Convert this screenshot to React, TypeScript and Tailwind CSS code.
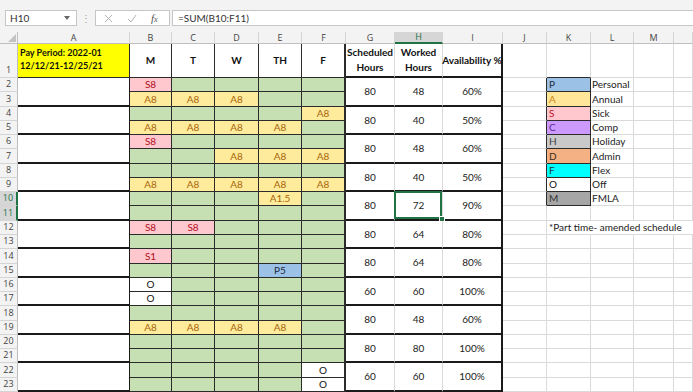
import clsx from 'clsx';

const schedule: string[][] = [
  ['S8', '', '', '', ''],
  ['A8', 'A8', 'A8', '', ''],
  ['', '', '', '', 'A8'],
  ['A8', 'A8', 'A8', 'A8', ''],
  ['S8', '', '', '', ''],
  ['', '', 'A8', 'A8', 'A8'],
  ['', '', '', '', ''],
  ['A8', 'A8', 'A8', 'A8', 'A8'],
  ['', '', '', 'A1.5', ''],
  ['', '', '', '', ''],
  ['S8', 'S8', '', '', ''],
  ['', '', '', '', ''],
  ['S1', '', '', '', ''],
  ['', '', '', 'P5', ''],
  ['O', '', '', '', ''],
  ['O', '', '', '', ''],
  ['', '', '', '', ''],
  ['A8', 'A8', 'A8', 'A8', ''],
  ['', '', '', '', ''],
  ['', '', '', '', ''],
  ['', '', '', '', 'O'],
  ['', '', '', '', 'O'],
];

const totals = [
  ['80', '48', '60%'],
  ['80', '40', '50%'],
  ['80', '48', '60%'],
  ['80', '40', '50%'],
  ['80', '72', '90%'],
  ['80', '64', '80%'],
  ['80', '64', '80%'],
  ['60', '60', '100%'],
  ['80', '48', '60%'],
  ['80', '80', '100%'],
  ['60', '60', '100%'],
];

const legend = [
  { code: 'P', label: 'Personal', tone: 'bg-[#9bc2e6] text-[#1f2a3a]' },
  { code: 'A', label: 'Annual', tone: 'bg-[#ffe699] text-[#d0851a]' },
  { code: 'S', label: 'Sick', tone: 'bg-[#ffc7ce] text-[#c0102a]' },
  { code: 'C', label: 'Comp', tone: 'bg-[#cc99ff] text-[#5b2a8a]' },
  { code: 'H', label: 'Holiday', tone: 'bg-[#c9c9c9] text-[#404040]' },
  { code: 'D', label: 'Admin', tone: 'bg-[#f4b183] text-[#3a2a1a]' },
  { code: 'F', label: 'Flex', tone: 'bg-[#00ffff] text-[#1a3a3a]' },
  { code: 'O', label: 'Off', tone: 'bg-white text-[#111]' },
  { code: 'M', label: 'FMLA', tone: 'bg-[#a6a6a6] text-[#333]' },
];

const cols = ['A', 'B', 'C', 'D', 'E', 'F', 'G', 'H', 'I', 'J', 'K', 'L', 'M', ''];
const grid = 'border-r border-b border-[#dadada] bg-white';

function tone(v: string) {
  if (v.startsWith('S')) return 'bg-[#ffc7ce] text-[#b0101c]';
  if (v.startsWith('A')) return 'bg-[#ffeb9c] text-[#a8650a]';
  if (v.startsWith('P')) return 'bg-[#9bc2e6] text-[#1f2a3a]';
  if (v === 'O') return 'bg-white text-[#111]';
  return 'bg-[#c6e0b4]';
}

function RowHead({ n, selected }: { n: number; selected?: boolean }) {
  return (
    <div
      className={clsx(
        "flex items-end justify-center pb-px font-['Open_Sans',sans-serif] text-[9px] leading-[12px] border-b border-b-[#d4d4d4]",
        selected
          ? 'bg-[#d6d6d6] text-[#217346] border-r-2 border-r-[#217346]'
          : 'bg-[#f3f3f3] text-[#444] border-r border-r-[#bfbfbf]'
      )}
    >
      {n}
    </div>
  );
}

function FormulaBar() {
  return (
    <div className="flex h-[32px] items-start bg-[#f3f3f3] pt-[10px] font-['Lato',sans-serif] text-[10px] text-[#333]">
      <div className="ml-[5px] flex h-[16px] w-[72px] items-center justify-between border border-[#c6c6c6] bg-white pl-[4px] pr-[6px]">
        <span>H10</span>
        <svg width="6" height="4" viewBox="0 0 6 4">
          <path d="M0 0h6L3 4z" fill="#666" />
        </svg>
      </div>
      <div className="flex h-[16px] w-[18px] items-center justify-center text-[10px] text-[#a0a0a0]">⋮</div>
      <div className="flex h-[16px] w-[75px] items-center border border-[#c6c6c6] bg-white">
        <svg className="ml-[8px]" width="9" height="9" viewBox="0 0 9 9">
          <path d="M1 1l7 7M8 1L1 8" stroke="#b4b4b4" strokeWidth="1" />
        </svg>
        <svg className="ml-[14px]" width="10" height="9" viewBox="0 0 10 9">
          <path d="M1 5l3 3 5-7" stroke="#b4b4b4" strokeWidth="1" fill="none" />
        </svg>
        <span className="ml-[14px] font-['Liberation_Serif',serif] text-[11px] italic text-[#555]">
          f<span className="text-[8px]">x</span>
        </span>
      </div>
      <div className="ml-[2px] flex h-[16px] flex-1 items-center border border-r-0 border-[#c6c6c6] bg-white pl-[5px]">
        =SUM(B10:F11)
      </div>
    </div>
  );
}

export default function App() {
  const body: JSX.Element[] = [];

  schedule.forEach((days, i) => {
    const r = i + 2;
    const first = i % 2 === 0;
    const sel = r === 10 || r === 11;
    body.push(<RowHead key={`rh${r}`} n={r} selected={sel} />);
    if (first) body.push(<div key={`a${r}`} className="row-span-2 border-r border-b-2 border-[#1a1a1a] bg-white" />);
    days.forEach((v, c) =>
      body.push(
        <div
          key={`d${r}${c}`}
          className={clsx(
            'flex items-center justify-center border-b border-[#2b2b2b] text-[10px]',
            c === 4 ? 'border-r-2' : 'border-r',
            tone(v)
          )}
        >
          {v}
        </div>
      )
    );
    if (first) {
      const [g, h, p] = totals[i / 2];
      body.push(
        <div key={`g${r}`} className="row-span-2 flex items-center justify-center border-r border-b-2 border-r-[#dadada] border-b-[#1a1a1a] text-[10px] text-[#222]">
          {g}
        </div>,
        <div key={`h${r}`} className="relative row-span-2 flex items-center justify-center border-r border-b-2 border-r-[#dadada] border-b-[#1a1a1a] text-[10px] text-[#222]">
          {h}
          {r === 10 && (
            <>
              <div className="absolute -left-px -top-px right-0 bottom-0 border-2 border-[#217346]" />
              <div className="absolute -bottom-[3px] -right-[3px] h-[6px] w-[6px] border border-white bg-[#217346]" />
            </>
          )}
        </div>,
        <div key={`i${r}`} className="row-span-2 flex items-center justify-center border-r-2 border-b-2 border-[#1a1a1a] text-[10px] text-[#222]">
          {p}
        </div>
      );
    }
    const lg = legend[r - 2];
    if (lg) {
      body.push(
        <div key={`j${r}`} className="border-r border-b border-r-[#2b2b2b] border-b-[#dadada] bg-white" />,
        <div key={`k${r}`} className={clsx('flex items-center border-r border-b border-[#2b2b2b] pl-[2px] text-[10px]', lg.tone)}>
          {lg.code}
        </div>,
        <div key={`l${r}`} className={clsx(grid, 'flex items-center pl-[1px] text-[10px] text-[#222]')}>
          {lg.label}
        </div>,
        <div key={`m${r}`} className={grid} />,
        <div key={`n${r}`} className={grid} />
      );
    } else if (r === 12) {
      body.push(
        <div key={`j${r}`} className={grid} />,
        <div key={`k${r}`} className="col-span-4 flex items-center whitespace-nowrap border-b border-[#dadada] bg-white pl-[2px] text-[10px] text-[#222]">
          *Part time- amended schedule
        </div>
      );
    } else {
      ['j', 'k', 'l', 'm', 'n'].forEach((k) => body.push(<div key={`${k}${r}`} className={grid} />));
    }
  });

  return (
    <div className="h-[392px] w-[693px] overflow-hidden bg-white font-['Lato',sans-serif] text-[#111]">
      <FormulaBar />
      <div className="grid grid-cols-[18px_112px_42px_43px_44px_43px_44px_49px_48px_60px_44px_44px_43px_40px_1fr] grid-rows-[12px_34px_14px_15px_14px_14px_14px_15px_14px_14px_14px_15px_14px_14px_15px_14px_14px_14px_15px_14px_14px_14px_15px_14px]">
        <div className="relative border-r border-b border-r-[#bfbfbf] border-b-[#bfbfbf] bg-[#f3f3f3]">
          <svg className="absolute bottom-[1px] right-[1px]" width="8" height="8" viewBox="0 0 8 8">
            <path d="M8 0v8H0z" fill="#c2c2c2" />
          </svg>
        </div>
        {cols.map((c, i) => (
          <div
            key={`col${i}`}
            className={clsx(
              "flex items-center justify-center border-r border-r-[#d4d4d4] font-['Open_Sans',sans-serif] text-[9px]",
              c === 'H'
                ? 'border-b-2 border-b-[#217346] bg-[#d6d6d6] text-[#217346]'
                : 'border-b border-b-[#bfbfbf] bg-[#f3f3f3] text-[#444]'
            )}
          >
            {c}
          </div>
        ))}

        <RowHead n={1} />
        <div className="border-r border-b border-[#2b2b2b] bg-[#ffff00] pl-[2px] pt-[2px] text-[9px] font-bold leading-[13px]">
          Pay Period: 2022-01
          <br />
          12/12/21-12/25/21
        </div>
        {['M', 'T', 'W', 'TH', 'F'].map((d, i) => (
          <div
            key={d}
            className={clsx(
              'flex items-center justify-center border-b border-[#2b2b2b] text-[10px] font-bold',
              i === 4 ? 'border-r-2' : 'border-r'
            )}
          >
            {d}
          </div>
        ))}
        <div className="flex items-center justify-center border-r border-b-2 border-r-[#dadada] border-b-[#1a1a1a] text-center text-[10px] font-bold leading-[15px]">
          Scheduled
          <br />
          Hours
        </div>
        <div className="flex items-center justify-center border-r border-b-2 border-r-[#dadada] border-b-[#1a1a1a] text-center text-[10px] font-bold leading-[15px]">
          Worked
          <br />
          Hours
        </div>
        <div className="flex items-center justify-center whitespace-nowrap border-r-2 border-b-2 border-[#1a1a1a] text-[10px] font-bold">
          Availability %
        </div>
        <div className={grid} />
        <div className="border-r border-b border-r-[#dadada] border-b-[#2b2b2b] bg-white" />
        <div className={grid} />
        <div className={grid} />
        <div className={grid} />

        {body}
      </div>
    </div>
  );
}
